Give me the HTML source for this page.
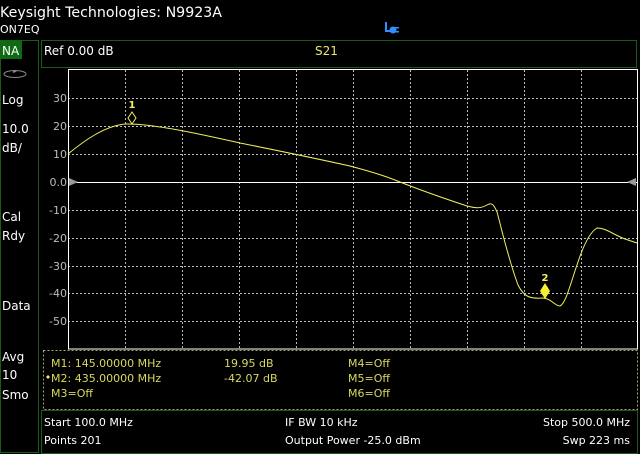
<!DOCTYPE html>
<html><head><meta charset="utf-8"><style>
html,body{margin:0;padding:0;background:#000;width:640px;height:454px;overflow:hidden}
svg{display:block}
text{font-family:"DejaVu Sans","Liberation Sans",sans-serif;}
</style></head><body>
<svg width="640" height="454" xmlns="http://www.w3.org/2000/svg">
<rect width="640" height="454" fill="#000"/>
<text x="0" y="17" fill="#fff" font-size="14.5" textLength="222" lengthAdjust="spacingAndGlyphs">Keysight Technologies: N9923A</text>
<text x="0" y="33" fill="#fff" font-size="11">ON7EQ</text>
<g fill="#2f8fff">
<rect x="385" y="22" width="2" height="10"/>
<rect x="385" y="30" width="5" height="2"/>
<circle cx="393" cy="30" r="3.5"/>
<rect x="395" y="27" width="4" height="1.5"/><rect x="395" y="31" width="4" height="1.5"/>
</g>
<rect x="0.5" y="40.5" width="38" height="412" fill="none" stroke="#1a5a1a"/>
<rect x="0" y="40" width="22" height="19" fill="#0f6a14"/>
<text x="2" y="55" fill="#fff" font-size="12">NA</text>
<ellipse cx="15" cy="74" rx="11" ry="3.5" fill="none" stroke="#888"/>
<path d="M13 70 L17 71.5 L13 73Z" fill="#888"/>
<g fill="#fff" font-size="12">
<text x="2" y="104">Log</text>
<text x="2" y="133">10.0</text>
<text x="2" y="152">dB/</text>
<text x="2" y="221">Cal</text>
<text x="2" y="240">Rdy</text>
<text x="2" y="310">Data</text>
<text x="2" y="361">Avg</text>
<text x="2" y="379">10</text>
<text x="2" y="399">Smo</text>
</g>
<rect x="41.5" y="40.5" width="595" height="27" fill="none" stroke="#1a5a1a"/>
<text x="44" y="55" fill="#fff" font-size="12">Ref 0.00 dB</text>
<text x="315" y="55" fill="#e8e870" font-size="12">S21</text>
<g fill="#bbb" font-size="11" text-anchor="end">
<text x="67" y="102">30</text><text x="67" y="130">20</text><text x="67" y="158">10</text>
<text x="67" y="186">0.0</text><text x="67" y="214">-10</text><text x="67" y="242">-20</text>
<text x="67" y="270">-30</text><text x="67" y="297">-40</text><text x="67" y="325">-50</text>
</g>
<g stroke="#bbb" stroke-dasharray="2,2" stroke-width="1">
<path d="M125.5 70V349M182.5 70V349M239.5 70V349M296.5 70V349M353.5 70V349M410.5 70V349M467.5 70V349M524.5 70V349M581.5 70V349"/>
<path d="M68 98.5H637M68 126.5H637M68 154.5H637M68 210.5H637M68 238.5H637M68 266.5H637M68 293.5H637M68 321.5H637"/>
</g>
<path d="M68.5 349V69.5H637.5V349H68" fill="none" stroke="#fff"/>
<path d="M68 182.5H637" stroke="#fff"/>
<path d="M69 178L78 182L69 186Z" fill="#999"/>
<path d="M636 178L627 182L636 186Z" fill="#999"/>
<path fill="none" stroke="#f0f060" stroke-width="1" d="M68 154 C85 140,105 126,125 124 C150 123,200 134,240 143 C270 149,300 155,350 166 C380 174,390 178,400 182 C420 190,440 197,467 206 C475 208,480 209,487 205 C492 202,494 205,497 212 C502 230,508 258,518 285 C524 297,530 299,543 298 C552 299,555 306,560 306 C566 303,570 285,578 262 C584 244,590 232,597 228 C606 228,612 234,625 239 L637 243"/>
<path d="M132 112L136 118L132 124L128 118Z" fill="none" stroke="#f0f060"/>
<text x="132" y="108" fill="#f0f060" font-size="10" font-weight="bold" text-anchor="middle">1</text>
<path d="M545 283L550 291L545 299L540 291Z" fill="#f5f030"/>
<text x="545" y="281" fill="#f0f060" font-size="10" font-weight="bold" text-anchor="middle">2</text>
<rect x="43.5" y="350.5" width="594" height="59" fill="none" stroke="#aaa870" stroke-dasharray="2,2"/>
<g fill="#d8d860" font-size="11">
<text x="51" y="367">M1:  145.00000 MHz</text>
<text x="51" y="382">M2:  435.00000 MHz</text>
<text x="51" y="397">M3=Off</text>
<text x="224" y="367">19.95 dB</text>
<text x="224" y="382">-42.07 dB</text>
<text x="348" y="367">M4=Off</text>
<text x="348" y="382">M5=Off</text>
<text x="348" y="397">M6=Off</text>
</g>
<path d="M48 375L50 377L48 379L46 377Z" fill="#f0f060"/>
<rect x="41.5" y="410.5" width="596" height="43" fill="none" stroke="#1a5a1a"/>
<g fill="#fff" font-size="11">
<text x="44" y="426">Start 100.0 MHz</text>
<text x="44" y="444">Points 201</text>
<text x="285" y="426">IF BW 10 kHz</text>
<text x="285" y="444">Output Power -25.0 dBm</text>
<text x="630" y="426" text-anchor="end">Stop 500.0 MHz</text>
<text x="630" y="444" text-anchor="end">Swp 223 ms</text>
</g>
</svg>
</body></html>
